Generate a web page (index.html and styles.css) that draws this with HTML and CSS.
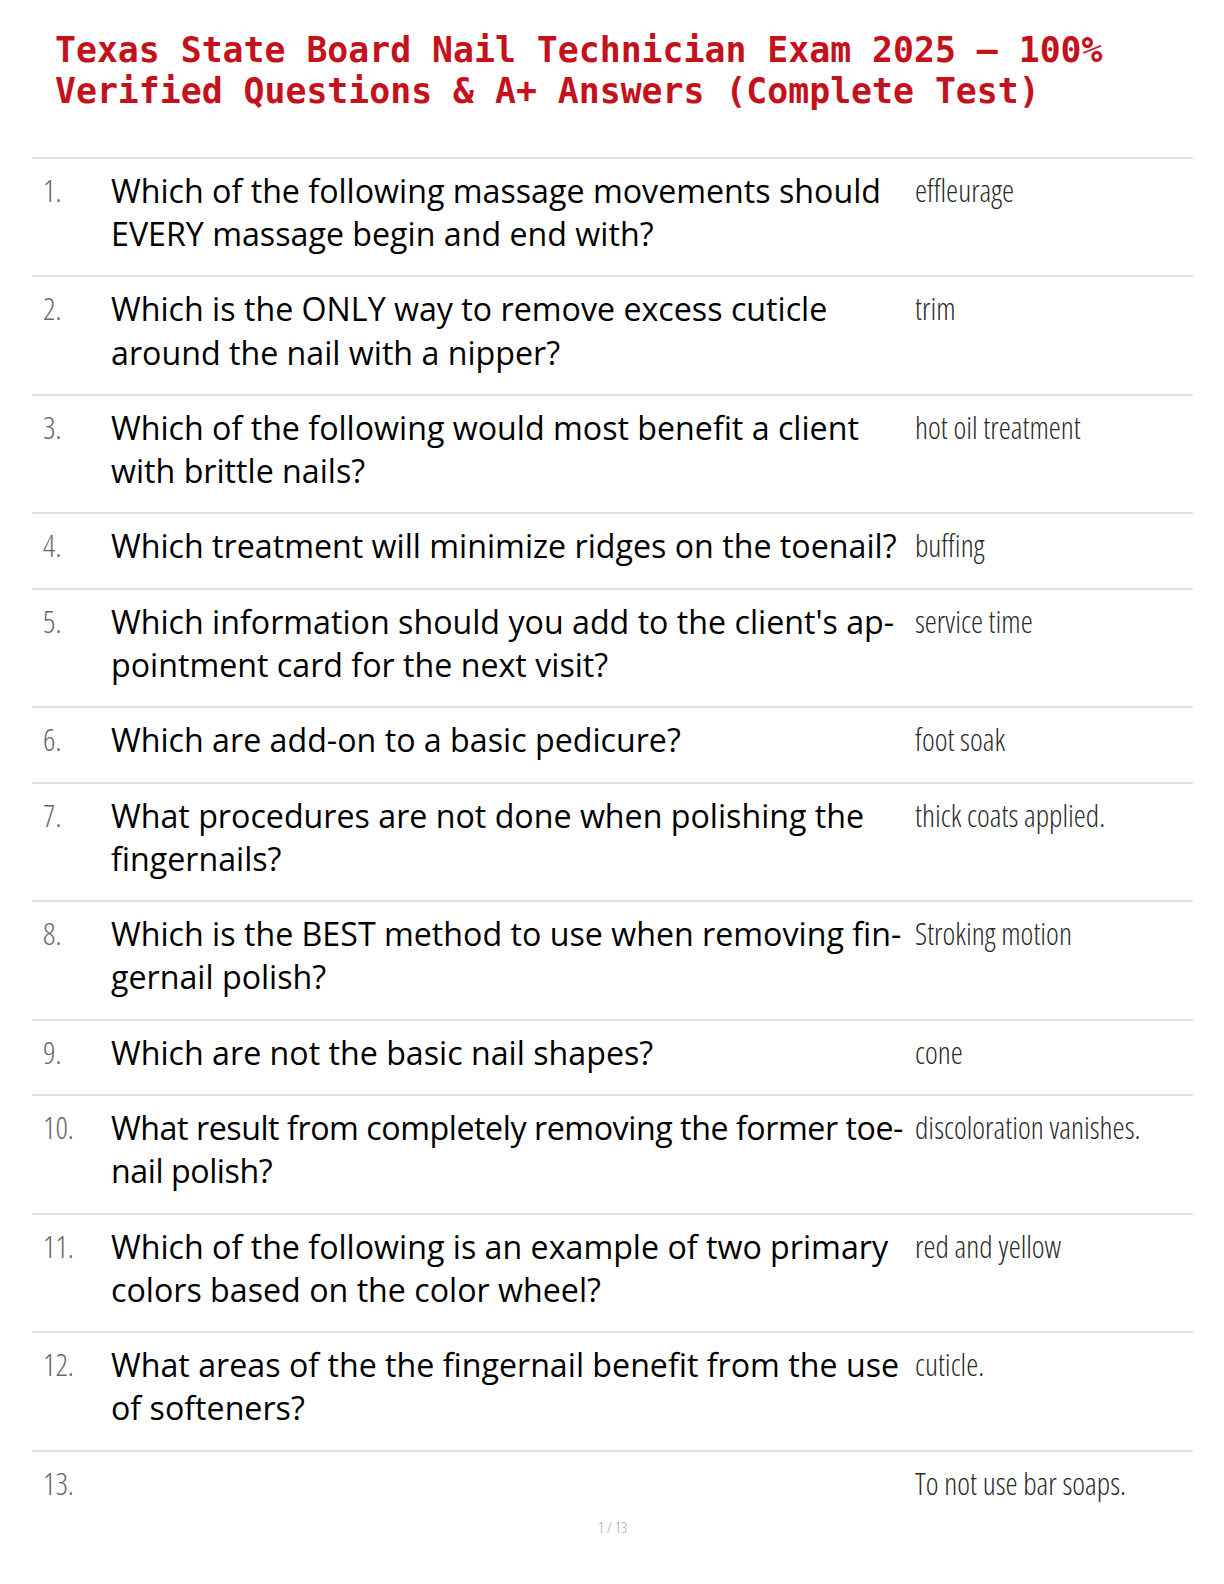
FILE: index.html
```html
<!DOCTYPE html>
<html lang="en">
<head>
<meta charset="utf-8">
<title>Texas State Board Nail Technician Exam 2025</title>
<link rel="stylesheet" href="styles.css">
</head>
<body>
<main class="page">
  <h1 class="title">Texas State Board Nail Technician Exam 2025 – 100% Verified Questions &amp; A+ Answers (Complete Test)</h1>
  <ol class="qa">
    <li class="row"><span class="num">1.</span><span class="q">Which of the following massage movements should EVERY massage begin and end with?</span><span class="a">effleurage</span></li>
    <li class="row"><span class="num">2.</span><span class="q">Which is the ONLY way to remove excess cuticle around the nail with a nipper?</span><span class="a">trim</span></li>
    <li class="row"><span class="num">3.</span><span class="q">Which of the following would most benefit a client with brittle nails?</span><span class="a">hot oil treatment</span></li>
    <li class="row"><span class="num">4.</span><span class="q">Which treatment will minimize ridges on the toenail?</span><span class="a">buffing</span></li>
    <li class="row"><span class="num">5.</span><span class="q">Which information should you add to the client's ap&shy;pointment card for the next visit?</span><span class="a">service time</span></li>
    <li class="row"><span class="num">6.</span><span class="q">Which are add-on to a basic pedicure?</span><span class="a">foot soak</span></li>
    <li class="row"><span class="num">7.</span><span class="q">What procedures are not done when polishing the fingernails?</span><span class="a">thick coats applied.</span></li>
    <li class="row"><span class="num">8.</span><span class="q">Which is the BEST method to use when removing fin&shy;gernail polish?</span><span class="a">Stroking motion</span></li>
    <li class="row"><span class="num">9.</span><span class="q">Which are not the basic nail shapes?</span><span class="a">cone</span></li>
    <li class="row"><span class="num">10.</span><span class="q q--tight">What result from completely removing the former toe&shy;nail polish?</span><span class="a">discoloration vanishes.</span></li>
    <li class="row"><span class="num">11.</span><span class="q">Which of the following is an example of two primary colors based on the color wheel?</span><span class="a">red and yellow</span></li>
    <li class="row"><span class="num">12.</span><span class="q">What areas of the the fingernail benefit from the use of softeners?</span><span class="a">cuticle.</span></li>
    <li class="row"><span class="num">13.</span><span class="q"></span><span class="a">To not use bar soaps.</span></li>
  </ol>
  <footer class="pager">1 / 13</footer>
</main>
</body>
</html>
```
FILE: styles.css
```css
html, body {
  margin: 0;
  padding: 0;
  background: #ffffff;
}

.page {
  width: 1224px;
  height: 1584px;
  box-sizing: border-box;
  padding: 30px 31px 0 32px;
}

.title {
  margin: 0 0 44px 0;
  padding-left: 23px;
  font-family: "DejaVu Sans Mono", "Liberation Mono", monospace;
  font-weight: bold;
  font-size: 34.8px;
  line-height: 41.4px;
  color: #c4121c;
  width: 1080px;
}

.qa {
  list-style: none;
  margin: 0;
  padding: 0;
}

.row {
  display: grid;
  grid-template-columns: 79px 804px 1fr;
  border-top: 2px solid #e1e1e6;
  padding: 10px 0 20.15px 0;
  line-height: 43.2px;
}

.num {
  padding-left: 11px;
  font-family: "Open Sans", "DejaVu Sans Condensed", sans-serif;
  font-stretch: 75%;
  font-weight: 300;
  font-size: 30.5px;
  color: #666666;
}

.q {
  font-family: "Open Sans", "Noto Sans", sans-serif;
  font-size: 32.2px;
  color: #000000;
  hyphens: manual;
}

.q--tight {
  letter-spacing: -0.45px;
}

.a {
  font-family: "Open Sans", "DejaVu Sans Condensed", sans-serif;
  font-stretch: 75%;
  font-weight: 300;
  font-size: 30.5px;
  color: #2a2a2a;
}

.pager {
  text-align: center;
  margin-top: -8px;
  font-family: "Open Sans", sans-serif;
  font-stretch: 75%;
  font-weight: 300;
  font-size: 15px;
  line-height: 20px;
  color: #a0a0a0;
}
```
